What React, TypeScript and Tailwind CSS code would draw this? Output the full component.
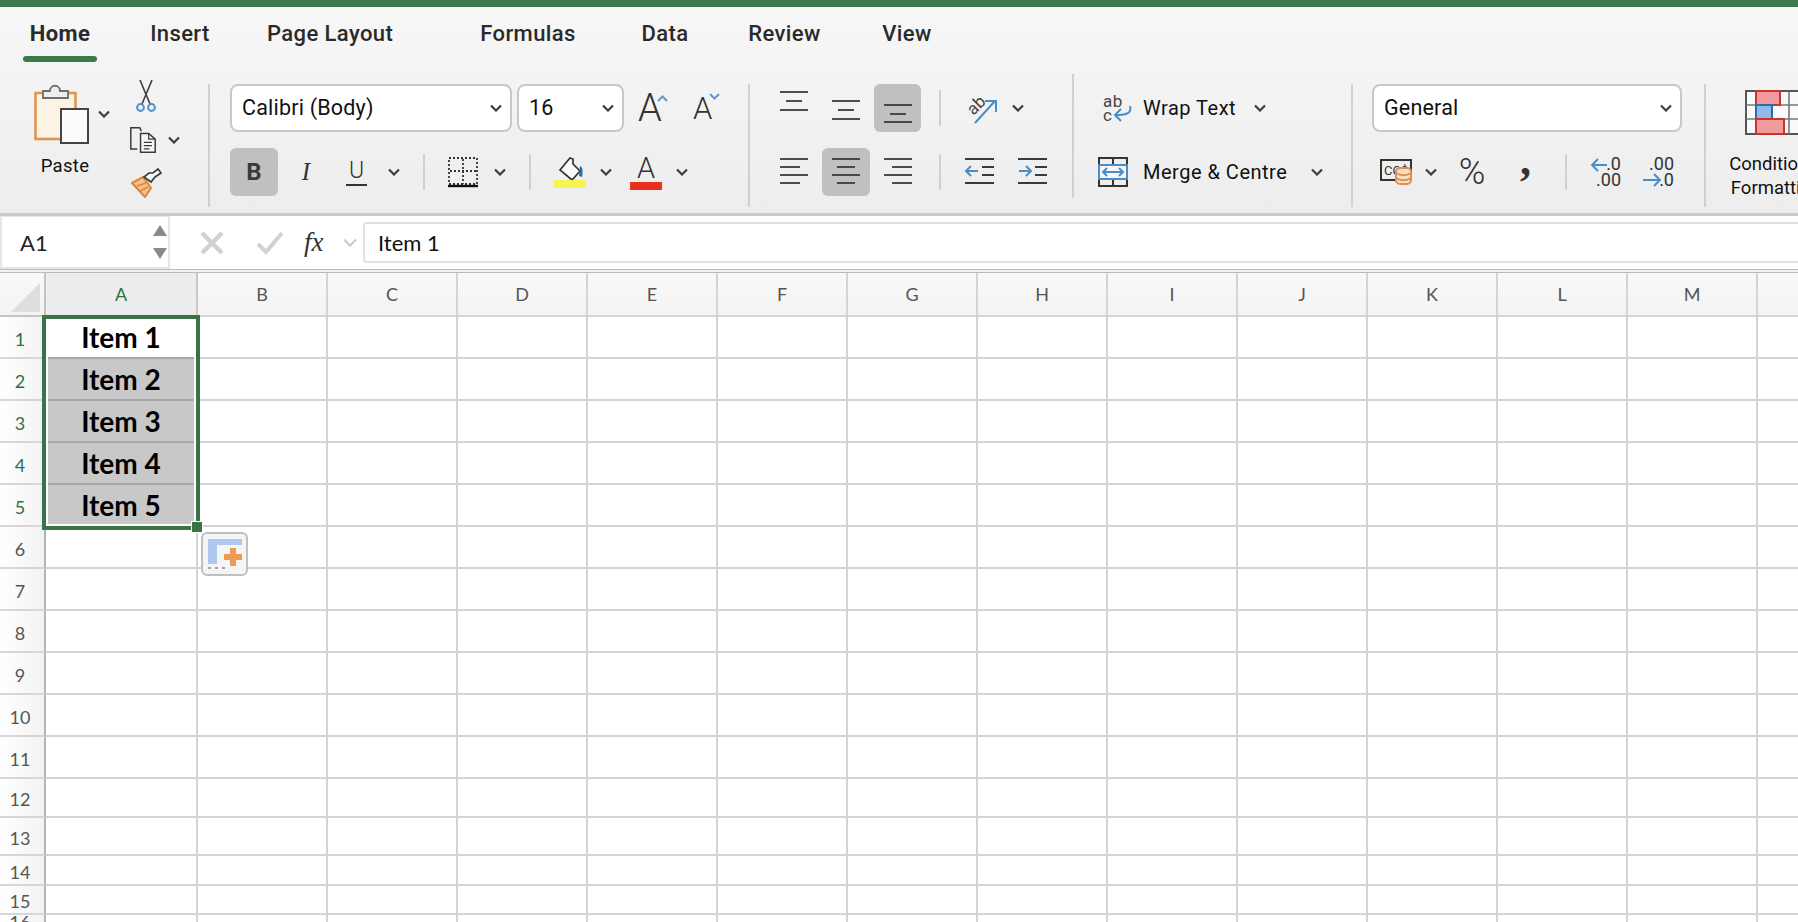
const ui = "font-['Roboto',sans-serif]";

const tabs = [
  { label: "Home", w: 74, ml: 23 },
  { label: "Insert", w: 72, ml: 47 },
  { label: "Page Layout", w: 119, ml: 51 },
  { label: "Formulas", w: 114, ml: 85 },
  { label: "Data", w: 58, ml: 51 },
  { label: "Review", w: 87, ml: 47 },
  { label: "View", w: 60, ml: 49 },
];

const columns = ["B", "C", "D", "E", "F", "G", "H", "I", "J", "K", "L", "M", ""];
const rowHeights = [42, 42, 42, 42, 42, 42, 42, 42, 42, 42, 42, 39, 38, 30, 29, 12];

function Chev() {
  return (
    <svg width="12" height="8" viewBox="0 0 12 8" className="shrink-0">
      <path d="M1 1.5 L6 6.5 L11 1.5" fill="none" stroke="#3d3d3d" strokeWidth="2.2" />
    </svg>
  );
}

function TallSep() {
  return <div className="w-[2px] h-[123px] mt-[10px] bg-[#d0d0d0] shrink-0" />;
}

function SmallSep({ ml }: { ml: string }) {
  return <div className={`w-[2px] h-[36px] bg-[#d0d0d0] shrink-0 ${ml}`} />;
}

function Lines({ rows }: { rows: [number, number, number][] }) {
  return (
    <svg width="28" height="32" viewBox="0 0 28 32" className="shrink-0">
      {rows.map(([y, x1, x2]) => (
        <line key={y + "-" + x1} x1={x1} x2={x2} y1={y} y2={y} stroke="#3a3a3a" strokeWidth="1.8" />
      ))}
    </svg>
  );
}

function SelectBox({ text, w, ml, chevMl }: { text: string; w: string; ml?: string; chevMl?: string }) {
  return (
    <div className={`h-[48px] ${w} ${ml ?? ""} bg-white border-2 border-[#c8c8c8] rounded-[8px] flex items-center justify-between pl-[10px] pr-[8px] shrink-0`}>
      <span className="text-[21.5px] text-[#111] tracking-[0.2px] whitespace-nowrap">{text}</span>
      <span className={chevMl}><Chev /></span>
    </div>
  );
}

function ClipboardIcon() {
  return (
    <svg width="56" height="60" viewBox="0 0 56 60">
      <rect x="1.5" y="9" width="40" height="46" fill="#fbf4e4" stroke="#e0954f" strokeWidth="2.6" />
      <path d="M9 14 V7 H16 C16 0 26 0 26 7 H34 V14 Z" fill="#efefef" stroke="#6e6e6e" strokeWidth="1.8" />
      <rect x="27" y="25" width="27" height="34" fill="#fbfbfb" stroke="#444" strokeWidth="2" />
    </svg>
  );
}

function ScissorsIcon() {
  return (
    <svg width="20" height="33" viewBox="0 0 20 33">
      <path d="M4 0 L14 24 M16 0 L6 24" stroke="#3f3f3f" strokeWidth="1.6" fill="none" />
      <circle cx="4.5" cy="27.5" r="3.4" fill="none" stroke="#4f8fca" strokeWidth="2" />
      <circle cx="15.5" cy="27.5" r="3.4" fill="none" stroke="#4f8fca" strokeWidth="2" />
    </svg>
  );
}

function CopyIcon() {
  return (
    <svg width="32" height="32" viewBox="0 0 32 32">
      <path d="M9 27 H1 V1 H12 L14 5" fill="none" stroke="#3a3a3a" strokeWidth="1.8" />
      <path d="M13 8 H23 L31 15 V31 H13 Z" fill="#f7f7f7" stroke="#3a3a3a" strokeWidth="1.8" />
      <path d="M23 8 V15 H31 M17 19 H27 M17 23 H27 M17 27 H24" fill="none" stroke="#3a3a3a" strokeWidth="1.5" />
    </svg>
  );
}

function BrushIcon() {
  return (
    <svg width="32" height="30" viewBox="0 0 32 30">
      <path d="M1 15 L12 9 L20 20 L14 29 Z" fill="#f3c28d" stroke="#e0843a" strokeWidth="2" />
      <path d="M6 18 L15 15 M9 23 L17 19" stroke="#e0843a" strokeWidth="1.5" />
      <path d="M13 9 L20 14 L24 9 L30 5 L27 1 L22 5 L18 5 Z" fill="#f7f7f7" stroke="#3f3f3f" strokeWidth="1.7" />
    </svg>
  );
}

function BordersIcon() {
  return (
    <svg width="30" height="31" viewBox="0 0 30 31">
      <rect x="1" y="1" width="28" height="26" fill="none" stroke="#333" strokeWidth="1.8" strokeDasharray="2 2" />
      <path d="M15 2 V27 M2 14 H28" stroke="#333" strokeWidth="1.8" strokeDasharray="2 2" />
      <line x1="0" x2="30" y1="29" y2="29" stroke="#111" strokeWidth="2.4" />
    </svg>
  );
}

function FillIcon() {
  return (
    <svg width="32" height="32" viewBox="0 0 32 32">
      <path d="M6 14 L16 2 L19 3 L19 8 L26 15 L18 24 Z" fill="#fafafa" stroke="#333" strokeWidth="1.7" />
      <path d="M26 10 C29 11 29 16 28 21 L25 20 Z" fill="#2e6bb0" />
      <rect x="0" y="24" width="32" height="8" fill="#f7f34f" />
    </svg>
  );
}

function OrientationIcon() {
  return (
    <svg width="34" height="32" viewBox="0 0 34 32">
      <text x="3" y="20" fontSize="17" fill="#444" fontFamily="Roboto, sans-serif" transform="rotate(-45 11 14)">ab</text>
      <path d="M11 31 L31 9 M21 9 H32 V20" fill="none" stroke="#4a8cc7" strokeWidth="2" />
    </svg>
  );
}

function WrapIcon() {
  return (
    <svg width="30" height="30" viewBox="0 0 30 30">
      <text x="0" y="14" fontSize="17" fill="#444" fontFamily="Roboto, sans-serif">ab</text>
      <text x="0" y="28" fontSize="17" fill="#444" fontFamily="Roboto, sans-serif">c</text>
      <path d="M27 13 C29 20 24 22 13 22 M18 16 L12 22 L18 28" fill="none" stroke="#4a8cc7" strokeWidth="2" />
    </svg>
  );
}

function MergeIcon() {
  return (
    <svg width="30" height="30" viewBox="0 0 30 30">
      <rect x="1" y="1" width="28" height="28" fill="none" stroke="#333" strokeWidth="2" />
      <path d="M15 1 V8 M15 22 V29" stroke="#333" strokeWidth="2" />
      <rect x="1" y="8" width="28" height="14" fill="#f6f6f6" stroke="#4a8cc7" strokeWidth="2" />
      <path d="M5 15 H25 M9 11 L5 15 L9 19 M21 11 L25 15 L21 19" fill="none" stroke="#4a8cc7" strokeWidth="2" />
    </svg>
  );
}

function CurrencyIcon() {
  return (
    <svg width="33" height="26" viewBox="0 0 33 26">
      <rect x="1" y="1" width="30" height="20" fill="none" stroke="#333" strokeWidth="2" />
      <text x="4" y="16" fontSize="13" fill="#333" fontFamily="Roboto, sans-serif">CC$</text>
      <rect x="16" y="9" width="15" height="16" rx="4" fill="#f4e0c8" stroke="#e0904a" strokeWidth="2" />
      <path d="M16 14 C20 17 27 17 31 14 M16 19 C20 22 27 22 31 19" fill="none" stroke="#e0904a" strokeWidth="1.8" />
    </svg>
  );
}

function DecimalIcon({ top, bottom, arrow }: { top: string; bottom: string; arrow: "left" | "right" }) {
  return (
    <svg width="32" height="32" viewBox="0 0 32 32">
      <text x="31" y="14" textAnchor="end" fontSize="18" fill="#333" fontFamily="Roboto, sans-serif">{top}</text>
      <text x="31" y="30" textAnchor="end" fontSize="18" fill="#333" fontFamily="Roboto, sans-serif">{bottom}</text>
      {arrow === "left" ? (
        <path d="M17 9 H2 M8 3 L2 9 L8 15" fill="none" stroke="#4a8cc7" strokeWidth="2" />
      ) : (
        <path d="M0 24 H17 M11 18 L17 24 L11 30" fill="none" stroke="#4a8cc7" strokeWidth="2" />
      )}
    </svg>
  );
}

function ConditionalIcon() {
  return (
    <svg width="53" height="45" viewBox="0 0 53 45" className="shrink-0">
      <rect x="1" y="1" width="60" height="43" fill="#fafafa" stroke="#555" strokeWidth="2" />
      <path d="M11 15 H60 M11 29 H60 M1 15 H11 M1 29 H11 M44 1 V44" stroke="#777" strokeWidth="1.6" />
      <rect x="11" y="1" width="24" height="14" fill="#f19aa0" stroke="#c8352f" strokeWidth="2" />
      <rect x="11" y="15" width="16" height="14" fill="#8fbbe9" stroke="#2d6cae" strokeWidth="2" />
      <rect x="11" y="29" width="28" height="15" fill="#f19aa0" stroke="#c8352f" strokeWidth="2" />
    </svg>
  );
}

function PasteOptions() {
  return (
    <div className="absolute left-[201px] top-[259px] w-[47px] h-[44px] rounded-[6px] border-2 border-[#c0c0c0] bg-[#f5f5f5] z-10 p-[3px]">
      <svg width="37" height="34" viewBox="0 0 37 34">
        <path d="M2 2 H36 V8 H11 V27 H2 Z" fill="#aec8ee" />
        <path d="M24 11 H30 V17 H36 V23 H30 V29 H24 V23 H18 V17 H24 Z" fill="#ee9a50" />
        <path d="M2 31 h3 M9 31 h3 M2 35 h3 M9 35 h3 M16 31 h3" stroke="#888" strokeWidth="1.6" />
      </svg>
    </div>
  );
}

function Ribbon() {
  return (
    <div className={`${ui} h-[206px] bg-gradient-to-b from-[#f7f7f7] to-[#ededed] overflow-hidden`}>
      <div className="flex h-[67px]">
        {tabs.map((t, i) => (
          <div key={t.label} className="relative shrink-0" style={{ width: t.w, marginLeft: t.ml }}>
            <div className={`pt-[12px] text-[22px] leading-[30px] text-center whitespace-nowrap tracking-[0.4px] text-[#2a2a2a] ${i === 0 ? "font-bold" : "font-medium"}`}>
              {t.label}
            </div>
            {i === 0 && <div className="mt-[7px] h-[6px] rounded-full bg-[#3b7a4b]" />}
          </div>
        ))}
      </div>

      <div className="flex h-[139px]">
        {/* clipboard */}
        <div className="w-[208px] shrink-0 flex">
          <div className="ml-[34px] mt-[10px] w-[56px] shrink-0">
            <ClipboardIcon />
            <div className="mt-[10px] text-[18.5px] leading-[24px] text-[#111] text-center ml-[6px] tracking-[0.3px]">Paste</div>
          </div>
          <div className="ml-[8px] mt-[36px] shrink-0"><Chev /></div>
          <div className="ml-[20px] mt-[6px] flex flex-col w-[50px] shrink-0">
            <div className="ml-[6px]"><ScissorsIcon /></div>
            <div className="mt-[11px] flex items-center">
              <CopyIcon />
              <span className="ml-[12px]"><Chev /></span>
            </div>
            <div className="mt-[12px] ml-[1px]"><BrushIcon /></div>
          </div>
        </div>
        <TallSep />

        {/* font */}
        <div className="w-[538px] shrink-0 pt-[10px] pl-[20px] flex flex-col gap-[16px]">
          <div className="flex items-center h-[48px]">
            <SelectBox text="Calibri (Body)" w="w-[282px]" />
            <SelectBox text="16" w="w-[107px]" ml="ml-[5px]" />
            <div className="ml-[14px] w-[31px] flex items-start shrink-0">
              <span className="text-[38px] leading-[38px] font-light text-[#333]">A</span>
              <svg width="11" height="7" viewBox="0 0 11 7" className="mt-[6px] -ml-[5px] shrink-0">
                <path d="M1 6 L5.5 1.5 L10 6" fill="none" stroke="#5a9bd5" strokeWidth="2" />
              </svg>
            </div>
            <div className="ml-[24px] w-[28px] flex items-start shrink-0">
              <span className="text-[31px] leading-[34px] font-light text-[#333] mt-[2px]">A</span>
              <svg width="11" height="7" viewBox="0 0 11 7" className="mt-[3px] -ml-[3px] shrink-0">
                <path d="M1 1 L5.5 5.5 L10 1" fill="none" stroke="#5a9bd5" strokeWidth="2" />
              </svg>
            </div>
          </div>
          <div className="flex items-center h-[48px]">
            <div className="w-[48px] h-[48px] rounded-[6px] bg-[#c0c0c0] flex items-center justify-center text-[24px] font-bold text-[#3a3a3a] shrink-0">B</div>
            <div className="ml-[18px] w-[20px] text-center text-[25px] italic font-light text-[#333] font-['Liberation_Serif',serif] shrink-0">I</div>
            <div className="ml-[30px] w-[21px] shrink-0 flex flex-col items-center">
              <span className="text-[23px] leading-[26px] font-light text-[#333]">U</span>
              <span className="w-full h-[2px] bg-[#333]" />
            </div>
            <div className="ml-[21px]"><Chev /></div>
            <SmallSep ml="ml-[23px]" />
            <div className="ml-[23px] shrink-0"><BordersIcon /></div>
            <div className="ml-[16px]"><Chev /></div>
            <SmallSep ml="ml-[23px]" />
            <div className="ml-[23px] shrink-0"><FillIcon /></div>
            <div className="ml-[14px]"><Chev /></div>
            <div className="ml-[18px] w-[32px] shrink-0 flex flex-col items-center">
              <span className="text-[29px] leading-[28px] font-light text-[#333]">A</span>
              <span className="w-full h-[8px] bg-[#e8301f]" />
            </div>
            <div className="ml-[14px]"><Chev /></div>
          </div>
        </div>
        <TallSep />

        {/* alignment */}
        <div className="w-[322px] shrink-0 pt-[10px] flex flex-col gap-[16px]">
          <div className="flex items-center h-[48px]">
            <div className="ml-[30px] mb-[12px]">
              <Lines rows={[[6, 0, 28], [15, 6, 22], [24, 0, 28]]} />
            </div>
            <div className="ml-[24px] mt-[6px]">
              <Lines rows={[[6, 0, 28], [15, 6, 22], [24, 0, 28]]} />
            </div>
            <div className="ml-[14px] w-[47px] h-[48px] rounded-[6px] bg-[#c0c0c0] flex items-end justify-center pb-[2px] shrink-0">
              <Lines rows={[[7, 0, 28], [16, 6, 22], [24, 0, 28]]} />
            </div>
            <SmallSep ml="ml-[18px]" />
            <div className="ml-[23px] shrink-0"><OrientationIcon /></div>
            <div className="ml-[14px]"><Chev /></div>
          </div>
          <div className="flex items-center h-[48px]">
            <div className="ml-[30px]">
              <Lines rows={[[3, 0, 28], [11, 0, 20], [19, 0, 28], [27, 0, 20]]} />
            </div>
            <div className="ml-[14px] w-[48px] h-[48px] rounded-[6px] bg-[#c0c0c0] flex items-center justify-center shrink-0">
              <Lines rows={[[3, 0, 28], [11, 5, 23], [19, 0, 28], [27, 5, 23]]} />
            </div>
            <div className="ml-[14px]">
              <Lines rows={[[3, 0, 28], [11, 8, 28], [19, 0, 28], [27, 8, 28]]} />
            </div>
            <SmallSep ml="ml-[27px]" />
            <svg width="29" height="32" viewBox="0 0 29 32" className="ml-[24px] shrink-0">
              <path d="M0 3 H29 M17 11 H29 M17 19 H29 M0 27 H29" stroke="#3a3a3a" strokeWidth="1.8" />
              <path d="M13 15 H1 M6 10 L1 15 L6 20" fill="none" stroke="#4a8cc7" strokeWidth="2" />
            </svg>
            <svg width="29" height="32" viewBox="0 0 29 32" className="ml-[24px] shrink-0">
              <path d="M0 3 H29 M17 11 H29 M17 19 H29 M0 27 H29" stroke="#3a3a3a" strokeWidth="1.8" />
              <path d="M1 15 H13 M8 10 L13 15 L8 20" fill="none" stroke="#4a8cc7" strokeWidth="2" />
            </svg>
          </div>
        </div>
        <div className="w-[2px] h-[124px] bg-[#d0d0d0] shrink-0" />

        {/* wrap and merge */}
        <div className="w-[277px] shrink-0 pt-[10px] flex flex-col gap-[16px] text-[20px] text-[#111] tracking-[0.5px]">
          <div className="flex items-center h-[48px]">
            <div className="ml-[29px] w-[28px] shrink-0"><WrapIcon /></div>
            <span className="ml-[12px] w-[111px] whitespace-nowrap shrink-0">Wrap Text</span>
            <Chev />
          </div>
          <div className="flex items-center h-[48px]">
            <div className="ml-[24px] w-[30px] shrink-0"><MergeIcon /></div>
            <span className="ml-[15px] w-[168px] whitespace-nowrap shrink-0">Merge &amp; Centre</span>
            <Chev />
          </div>
        </div>
        <TallSep />

        {/* number */}
        <div className="w-[351px] shrink-0 pt-[10px] flex flex-col gap-[16px]">
          <div className="flex items-center h-[48px]">
            <SelectBox text="General" w="w-[310px]" ml="ml-[19px]" />
          </div>
          <div className="flex items-center h-[48px]">
            <div className="ml-[27px] w-[32px] shrink-0"><CurrencyIcon /></div>
            <div className="ml-[13px]"><Chev /></div>
            <span className="ml-[20px] w-[30px] text-center text-[36px] leading-[40px] font-light text-[#333] shrink-0">%</span>
            <span className="ml-[31px] w-[15px] text-center text-[44px] leading-[30px] font-bold text-[#333] font-['Liberation_Serif',serif] shrink-0 -mt-[22px]">,</span>
            <SmallSep ml="ml-[32px]" />
            <div className="ml-[23px] shrink-0"><DecimalIcon top=".0" bottom=".00" arrow="left" /></div>
            <div className="ml-[21px] shrink-0"><DecimalIcon top=".00" bottom=".0" arrow="right" /></div>
          </div>
        </div>
        <TallSep />

        {/* conditional formatting, runs off the right edge */}
        <div className="flex-1 min-w-0 overflow-hidden pt-[16px]">
          <div className="ml-[39px] flex"><ConditionalIcon /></div>
          <div className="ml-[14px] mt-[17px] w-[112px] text-center text-[18.5px] leading-[24px] text-[#111] whitespace-nowrap">
            Conditional
            <br />
            Formatting
          </div>
        </div>
      </div>
    </div>
  );
}

function FormulaBar() {
  return (
    <div className={`${ui} flex h-[53px] bg-white`}>
      <div className="w-[170px] shrink-0 bg-[#e6e6e6] pl-[2px] pr-[2px] pt-[1px] pb-[2px]">
        <div className="h-full bg-white flex items-center justify-between pl-[18px] pr-[1px]">
          <span className="text-[22px] text-[#222] font-['Lato',sans-serif]">A1</span>
          <div className="flex flex-col gap-[12px]">
            <div className="w-0 h-0 border-x-[7px] border-x-transparent border-b-[11px] border-b-[#8a8a8a]" />
            <div className="w-0 h-0 border-x-[7px] border-x-transparent border-t-[11px] border-t-[#8a8a8a]" />
          </div>
        </div>
      </div>
      <div className="flex-1 flex items-center min-w-0">
        <svg width="24" height="24" viewBox="0 0 24 24" className="ml-[30px] shrink-0">
          <path d="M2 2 L22 22 M22 2 L2 22" stroke="#d2d2d2" strokeWidth="4.5" />
        </svg>
        <svg width="28" height="24" viewBox="0 0 28 24" className="ml-[32px] shrink-0">
          <path d="M2 13 L10 21 L26 2" fill="none" stroke="#d2d2d2" strokeWidth="4" />
        </svg>
        <span className="ml-[20px] w-[28px] text-[27px] italic text-[#333] font-['Liberation_Serif',serif] shrink-0">fx</span>
        <svg width="14" height="9" viewBox="0 0 14 9" className="ml-[11px] shrink-0">
          <path d="M1 1.5 L7 7.5 L13 1.5" fill="none" stroke="#c8c8c8" strokeWidth="2" />
        </svg>
        <div className="ml-[6px] flex-1 h-[41px] -mt-[1px] border-l-2 border-y-2 border-[#e0e0e0] rounded-l-[4px] pl-[13px] flex items-center text-[22px] text-[#111] font-['Lato',sans-serif]">
          Item 1
        </div>
      </div>
    </div>
  );
}

function Sheet() {
  return (
    <div className="relative font-['Lato',sans-serif] flex-1 min-h-0 bg-white overflow-hidden">
      <div className="flex h-[44px] bg-gradient-to-b from-[#f9f9f9] to-[#f3f3f3]">
        <div className="w-[46px] shrink-0 border-r-2 border-b-2 border-[#c4c4c4] pl-[11px] pt-[10px]">
          <div className="w-[29px] h-[29px] bg-[#dedede] [clip-path:polygon(100%_0,100%_100%,0_100%)]" />
        </div>
        <div className="w-[152px] shrink-0 border-r-2 border-b-2 border-[#c8c8c8] bg-[#ededed] flex items-center justify-center text-[18px] text-[#2f7046]">A</div>
        {columns.map((c, i) => (
          <div key={i} className="w-[130px] shrink-0 border-r-2 border-b-2 border-[#d4d4d4] flex items-center justify-center text-[18px] text-[#555]">{c}</div>
        ))}
      </div>

      {rowHeights.map((h, i) => {
        const selected = i < 5;
        return (
          <div key={i} className="flex" style={{ height: h }}>
            <div className={`w-[46px] shrink-0 border-r-2 border-[#b4b4b4] border-b-2 border-b-[#d6d6d6] bg-gradient-to-r from-white to-[#f3f3f3] flex items-center justify-center pr-[4px] pt-[4px] text-[18px] ${selected ? "text-[#2f7046]" : "text-[#555]"}`}>
              {i + 1}
            </div>
            <div className={`w-[152px] shrink-0 border-r-2 border-b-2 flex items-center justify-center text-[28px] leading-none font-bold text-black ${i > 0 && selected ? "bg-[#c8c8c8]" : ""} ${selected ? "border-b-[#a8a8a8] border-r-[#d4d4d4]" : "border-[#d4d4d4]"}`}>
              {selected ? `Item ${i + 1}` : ""}
            </div>
            {columns.map((_, j) => (
              <div key={j} className="w-[130px] shrink-0 border-r-2 border-b-2 border-[#d4d4d4]" />
            ))}
          </div>
        );
      })}

      {/* selection outline and fill handle */}
      <div className="absolute left-[42px] top-[42px] w-[158px] h-[215px] border-[4px] border-[#3b7349] shadow-[inset_0_0_0_2px_white]" />
      <div className="absolute left-[191px] top-[248px] w-[12px] h-[12px] bg-[#3b7349] border border-white" />
      <PasteOptions />
    </div>
  );
}

export default function App() {
  return (
    <div className="w-[1798px] h-[922px] flex flex-col overflow-hidden bg-white">
      <div className="h-[7px] bg-[#3b7a4b] shrink-0" />
      <Ribbon />
      <div className="h-[3px] bg-[#c9c9c9] shrink-0" />
      <FormulaBar />
      <div className="h-[4px] shrink-0 border-y border-[#bcbcbc] bg-[#f2f2f2]" />
      <Sheet />
    </div>
  );
}
